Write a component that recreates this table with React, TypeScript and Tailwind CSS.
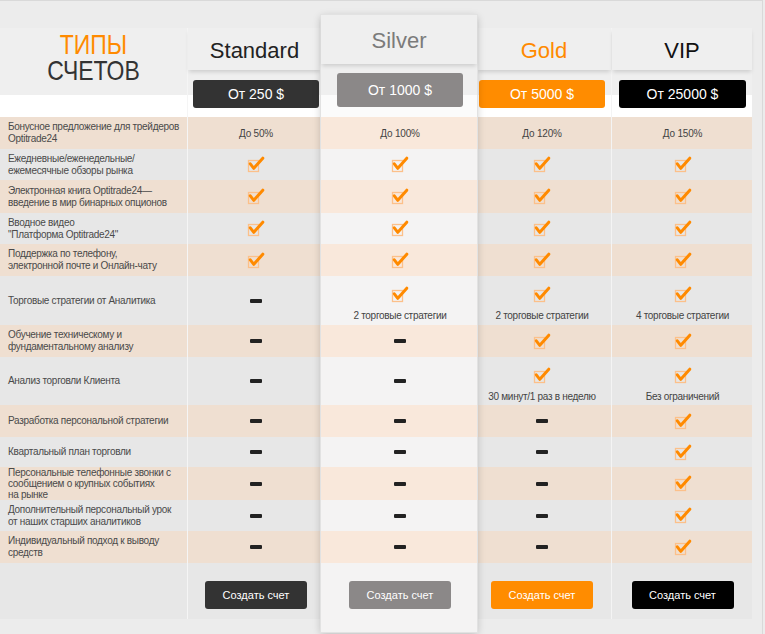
import React from "react";

type Cell = { t: "text"; text: string } | { t: "check"; note?: string } | { t: "dash" };

const T = (text: string): Cell => ({ t: "text", text });
const C = (note?: string): Cell => ({ t: "check", note });
const D: Cell = { t: "dash" };

const rowHeights = [
    "h-[32px]",
    "h-[31px]",
    "h-[33px]",
    "h-[31px]",
    "h-[32px]",
    "h-[49px]",
    "h-[32px]",
    "h-[48px]",
    "h-[32px]",
    "h-[30px]",
    "h-[33px]",
    "h-[31px]",
    "h-[32px]",
];

const labels: React.ReactNode[] = [
    <>Бонусное предложение для трейдеров<br />Optitrade24</>,
    <>Ежедневные/еженедельные/<br />ежемесячные обзоры рынка</>,
    <>Электронная книга Optitrade24—<br />введение в мир бинарных опционов</>,
    <>Вводное видео<br />"Платформа Optitrade24"</>,
    <>Поддержка по телефону,<br />электронной почте и Онлайн-чату</>,
    <>Торговые стратегии от Аналитика</>,
    <>Обучение техническому и<br />фундаментальному анализу</>,
    <>Анализ торговли Клиента</>,
    <>Разработка персональной стратегии</>,
    <>Квартальный план торговли</>,
    <>Персональные телефонные звонки с<br />сообщением о крупных событиях<br />на рынке</>,
    <>Дополнительный персональный урок<br />от наших старших аналитиков</>,
    <>Индивидуальный подход к выводу<br />средств</>,
];

interface Plan {
    name: string;
    price: string;
    nameColor: string;
    btnColor: string;
    width: string;
    box: string;
    cells: Cell[];
    divider?: string;
}

const plans: Plan[] = [
    {
        name: "Standard",
        price: "От 250 $",
        nameColor: "text-[#222222]",
        btnColor: "bg-[#333333]",
        width: "w-[133px]",
        box: "ml-[5px] w-[126px]",
        cells: [T("До 50%"), C(), C(), C(), C(), D, D, D, D, D, D, D, D],
    },
    {
        name: "Silver",
        price: "От 1000 $",
        nameColor: "text-[#7b7b7b]",
        btnColor: "bg-[#8b8888]",
        width: "w-[156px]",
        box: "ml-[16px] w-[126px]",
        cells: [T("До 100%"), C(), C(), C(), C(), C("2 торговые стратегии"), D, D, D, D, D, D, D],
    },
    {
        name: "Gold",
        price: "От 5000 $",
        nameColor: "text-[#ff8a00]",
        btnColor: "bg-[#ff8c00]",
        width: "w-[135px]",
        box: "ml-[2px] w-[126px]",
        cells: [T("До 120%"), C(), C(), C(), C(), C("2 торговые стратегии"), C(), C("30 минут/1 раз в неделю"), D, D, D, D, D],
        divider: "border-r border-[#f4f4f4]",
    },
    {
        name: "VIP",
        price: "От 25000 $",
        nameColor: "text-[#111111]",
        btnColor: "bg-[#000000]",
        width: "w-[140px]",
        box: "ml-[7px] w-[127px]",
        cells: [T("До 150%"), C(), C(), C(), C(), C("4 торговые стратегии"), C(), C("Без ограничений"), C(), C(), C(), C(), C()],
    },
];

const CheckIcon = () => (
    <svg width="18" height="17" viewBox="0 0 18 17" className="shrink-0">
        <rect x="1.5" y="4.5" width="10" height="11" fill="none" stroke="#fcc08a" strokeWidth="1.3" />
        <path d="M3.3 7.8 L6.8 12.3 L15.8 2.2" fill="none" stroke="#ff8a00" strokeWidth="3" strokeLinecap="round" strokeLinejoin="round" />
    </svg>
);

const Dash = () => <div className="w-[12px] h-[4px] rounded-[1px] bg-[#222222]" />;

const CellView = ({ cell }: { cell: Cell }) => {
    if (cell.t === "text") return <span className="text-[10px] tracking-[-0.2px] text-[#444444]">{cell.text}</span>;
    if (cell.t === "dash") return <Dash />;
    return (
        <div className="flex flex-col items-center gap-[7px]">
            <CheckIcon />
            {cell.note && (
                <span className="text-[10px] leading-[12px] tracking-[-0.3px] text-[#444444] whitespace-nowrap">
                    {cell.note}
                </span>
            )}
        </div>
    );
};

const LabelColumn = () => (
    <div className="w-[188px] shrink-0 border-r border-[#f5f5f5]">
        {/* Title */}
        <div className="h-[89px] bg-[linear-gradient(to_bottom,#efefef_67px,#ffffff_67px)] flex flex-col items-center pt-[4px]">
            <div className="scale-x-[0.82] text-center leading-[26px] text-[28px]">
                <div className="text-[#ff8a00]">ТИПЫ</div>
                <div className="text-[#333333]">СЧЕТОВ</div>
            </div>
        </div>

        {/* Feature names */}
        {labels.map((label, i) => (
            <div
                key={i}
                className={`${rowHeights[i]} ${i % 2 === 0 ? "bg-[#efdfd1]" : "bg-[#e7e7e7]"} flex items-center pl-[8px] text-[10px] tracking-[-0.3px] whitespace-nowrap ${i === 10 ? "leading-[11px]" : "leading-[12px]"} text-[#4a4a4a]`}
            >
                <div>{label}</div>
            </div>
        ))}

        <div className="h-[56px] bg-[#e7e7e7]" />
    </div>
);

const PlanColumn = ({ plan, featured }: { plan: Plan; featured?: boolean }) => {
    const beige = featured ? "bg-[#f9e8db]" : "bg-[#efdfd1]";
    const gray = featured ? "bg-[#f4f3f3]" : "bg-[#e7e7e7]";

    return (
        <div
            className={`${plan.width} shrink-0 ${plan.divider ?? ""} ${
                featured
                    ? "relative z-10 -mt-[13px] bg-[#f4f3f3] shadow-[0_0_0_1px_#e2e2e2,0_2px_8px_rgba(0,0,0,0.22)]"
                    : ""
            }`}
        >
            {/* Header */}
            <div
                className={
                    featured
                        ? "h-[102px] bg-[linear-gradient(to_bottom,#efefef_80px,#fbfbfb_80px)]"
                        : "h-[89px] bg-[linear-gradient(to_bottom,#efefef_67px,#ffffff_67px)]"
                }
            >
                <div
                    className={`${featured ? "h-[49px] pt-[2px]" : "h-[42px] pt-[2px]"} flex items-center justify-center bg-[#efefef] shadow-[0_3px_4px_-1px_rgba(0,0,0,0.14)] text-[22px] ${plan.nameColor}`}
                >
                    {plan.name}
                </div>
                <div
                    className={`${plan.box} ${featured ? "mt-[9px] h-[34px]" : "mt-[10px] h-[28px]"} ${plan.btnColor} rounded-[3px] flex items-center justify-center text-[14px] text-white`}
                >
                    {plan.price}
                </div>
            </div>

            {/* Rows */}
            {plan.cells.map((cell, i) => (
                <div key={i} className={`${rowHeights[i]} ${i % 2 === 0 ? beige : gray}`}>
                    <div
                        className={`${plan.box} h-full flex justify-center ${
                            cell.t === "check" && cell.note ? "items-start pt-[10px]" : "items-center"
                        }`}
                    >
                        <CellView cell={cell} />
                    </div>
                </div>
            ))}

            {/* Footer */}
            <div className={`${featured ? "h-[69px]" : "h-[56px]"} ${gray}`}>
                <div className={`${plan.box} flex justify-center pt-[18px]`}>
                    <button
                        className={`w-[102px] h-[28px] rounded-[3px] ${plan.btnColor} text-white text-[11px]`}
                    >
                        Создать счет
                    </button>
                </div>
            </div>
        </div>
    );
};

export default function App() {
    return (
        <div className="w-[765px] h-[634px] bg-[#ececec] overflow-hidden font-['Liberation_Sans',Arial,sans-serif]">
            <div className="w-[763px] h-full border-t border-r border-[#d9d9d9]">
                <div className="flex items-start pt-[27px]">
                    <LabelColumn />
                    <PlanColumn plan={plans[0]} />
                    <PlanColumn plan={plans[1]} featured />
                    <PlanColumn plan={plans[2]} />
                    <PlanColumn plan={plans[3]} />
                </div>
            </div>
        </div>
    );
}
